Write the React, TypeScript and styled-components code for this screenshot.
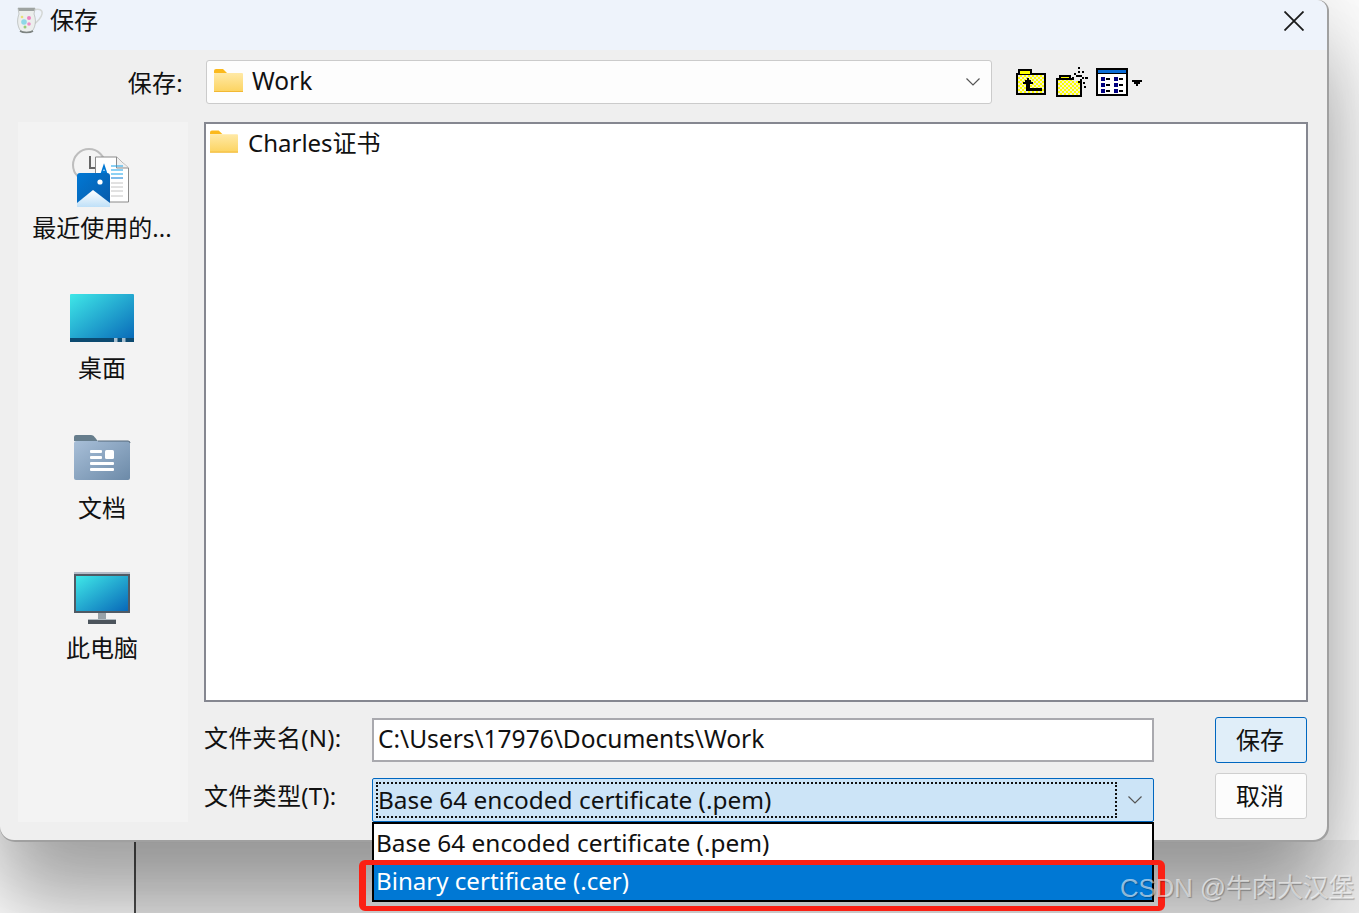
import React from 'react';
import styled, { createGlobalStyle } from 'styled-components';

const GlobalStyle = createGlobalStyle`
  html, body {
    margin: 0;
    padding: 0;
    background: #ffffff;
    overflow: hidden;
  }
  body {
    font-family: 'Noto Sans', 'Noto Sans CJK SC', sans-serif;
    color: #111111;
  }
`;

const Page = styled.div`
  position: relative;
  width: 1359px;
  height: 913px;
  overflow: hidden;
  background: #ffffff;
`;

const Dialog = styled.div`
  position: relative;
  z-index: 1;
  box-sizing: border-box;
  width: 1327px;
  height: 840px;
  background: #efefef;
  border-radius: 0 10px 14px 14px;
  box-shadow: 1px 1px 0 1px #a0a0a0, 0 0 100px rgba(0, 0, 0, 0.18),
    0 70px 80px rgba(0, 0, 0, 0.3);
  display: flex;
  flex-direction: column;
`;

const BehindWindow = styled.div`
  box-sizing: border-box;
  width: 1225px;
  height: 73px;
  margin-left: 134px;
  background: #eeeeee;
  border-left: 2px solid #4d4d4d;
  box-shadow: -4px 0 0 rgba(255, 255, 255, 0.25);
`;

const TitleBar = styled.div`
  height: 50px;
  flex: none;
  display: flex;
  align-items: center;
  padding: 0 23px 10px 16px;
  box-sizing: border-box;
  background: #eef3fb;
  border-radius: 0 10px 0 0;
  font-size: 24px;
  line-height: 34px;
`;

const TitleText = styled.span`
  margin-left: 6px;
  flex: 1;
`;

const CloseSlot = styled.span`
  display: flex;
  margin-top: 2px;
`;

const ToolRow = styled.div`
  display: flex;
  align-items: center;
  height: 44px;
  margin-top: 10px;
`;

const LookInLabel = styled.div`
  width: 183px;
  text-align: right;
  font-size: 24px;
  line-height: 34px;
  padding-top: 2px;
  letter-spacing: 0.3px;
`;

const LookInSelect = styled.div`
  box-sizing: border-box;
  width: 786px;
  height: 44px;
  margin-left: 23px;
  padding: 0 11px 4px 7px;
  display: flex;
  align-items: center;
  gap: 9px;
  background: #fdfdfd;
  border: 1px solid #cbcbcb;
  border-radius: 3px;
  font-size: 24.5px;
`;

const SelectText = styled.span`
  flex: 1;
`;

const SelectArrow = styled.span`
  display: flex;
  margin-top: 4px;
`;

const ToolIcons = styled.div`
  display: flex;
  align-items: center;
  margin-left: 24px;
  gap: 8px;
`;

const MainRow = styled.div`
  display: flex;
  gap: 16px;
  margin-top: 18px;
  padding-left: 18px;
`;

const Sidebar = styled.nav`
  box-sizing: border-box;
  width: 170px;
  height: 700px;
  padding: 22px 2px 0 0;
  background: #f3f3f3;
`;

const PlaceItem = styled.div`
  height: 140px;
  display: flex;
  flex-direction: column;
  align-items: center;
  font-size: 24px;
  line-height: 34px;
  white-space: nowrap;
`;

const PlaceLabel = styled.span`
  margin-top: 3px;
`;

const ContentColumn = styled.div`
  width: 1104px;
`;

const FileList = styled.div`
  box-sizing: border-box;
  height: 580px;
  padding: 4px 4px;
  background: #ffffff;
  border: 2px solid #858790;
`;

const FileRow = styled.div`
  display: flex;
  align-items: center;
  gap: 10px;
  height: 26px;
  font-size: 24px;
`;

const BottomRow = styled.div`
  display: flex;
  justify-content: space-between;
  margin-top: 16px;
`;

const Fields = styled.div`
  display: grid;
  grid-template-columns: 168px 782px;
  grid-auto-rows: 44px;
  row-gap: 16px;
`;

const FieldLabel = styled.label<{ $top: number }>`
  font-size: 24px;
  line-height: 34px;
  padding-top: ${({ $top }) => $top}px;
  letter-spacing: 0.3px;
  white-space: nowrap;
`;

const PathInput = styled.div`
  box-sizing: border-box;
  display: flex;
  align-items: center;
  padding: 0 0 4px 4px;
  background: #ffffff;
  border: 2px solid #a9a9ae;
  font-size: 24.5px;
  white-space: nowrap;
`;

const TypeCombo = styled.div`
  position: relative;
  box-sizing: border-box;
  display: flex;
  align-items: center;
  padding: 3px 11px 3px 3px;
  background: #cce4f7;
  border: 1px solid #0067c0;
  border-radius: 2px;
  font-size: 24.4px;
`;

const FocusBox = styled.div`
  box-sizing: border-box;
  width: 741px;
  height: 36px;
  margin-right: 11px;
  padding-bottom: 2px;
  display: flex;
  align-items: center;
  border: 2px dotted #111111;
  white-space: nowrap;
`;

const TypeList = styled.div`
  position: absolute;
  z-index: 2;
  top: 43px;
  left: -1px;
  right: -1px;
  height: 80px;
  box-sizing: border-box;
  background: #ffffff;
  border: 2px solid #000000;
  font-size: 24.4px;
`;

const TypeOption = styled.div<{ $selected?: boolean }>`
  box-sizing: border-box;
  height: ${({ $selected }) => ($selected ? 36 : 40)}px;
  padding: 0 0 ${({ $selected }) => ($selected ? 3 : 4)}px 2px;
  display: flex;
  align-items: center;
  white-space: nowrap;
  font-size: ${({ $selected }) => ($selected ? 24.1 : 24.4)}px;
  background: ${({ $selected }) => ($selected ? '#0078d4' : '#ffffff')};
  color: ${({ $selected }) => ($selected ? '#ffffff' : '#111111')};
`;

const Buttons = styled.div`
  display: flex;
  flex-direction: column;
  gap: 10px;
  width: 92px;
  margin: -1px 1px 0 0;
`;

const DialogButton = styled.button<{ $primary?: boolean }>`
  height: 46px;
  padding: 0 2px 4px 0;
  font: inherit;
  font-size: 24px;
  color: #111111;
  border-radius: 3px;
  background: ${({ $primary }) => ($primary ? '#e0eef9' : '#fcfcfc')};
  border: 1px solid ${({ $primary }) => ($primary ? '#0067c0' : '#cfcfcf')};
`;

const RedMark = styled.div`
  position: absolute;
  z-index: 3;
  left: 359px;
  top: 860px;
  width: 806px;
  height: 51px;
  box-sizing: border-box;
  border: solid #fb2014;
  border-width: 5px 7px 5px 7px;
  border-radius: 6px;
`;

const Watermark = styled.div`
  position: absolute;
  z-index: 4;
  left: 1120px;
  top: 871px;
  font-family: 'Liberation Sans', 'Noto Sans CJK SC', sans-serif;
  font-size: 25.7px;
  line-height: 34px;
  white-space: nowrap;
  color: rgba(255, 255, 255, 0.58);
  text-shadow: 1px 1px 1px rgba(0, 0, 0, 0.28);
`;

const FolderIcon = ({ width = 29 }: { width?: number }) => (
  <svg width={width} height="23" viewBox="0 0 29 23">
    <defs>
      <linearGradient id="folderBody" x1="0" y1="0" x2="0" y2="1">
        <stop offset="0" stopColor="#ffe9a6" />
        <stop offset="1" stopColor="#fcd35f" />
      </linearGradient>
    </defs>
    <path d="M0 2a2 2 0 0 1 2-2h7l4 4H0z" fill="#fbb91c" />
    <rect x="0" y="4" width="29" height="19" rx="1" fill="url(#folderBody)" />
    <rect x="0" y="22" width="29" height="1" fill="#f2b833" />
  </svg>
);

const JugIcon = () => (
  <svg width="28" height="28" viewBox="0 0 28 28">
    <path d="M18 4c5-2 9 0 8 4-1 5-5 8-9 11" fill="none" stroke="#d4d7d5" strokeWidth="1.4" />
    <path d="M2 2h17l-1 6c2 5 2 11-1 16-2 3-11 3-13 0-3-5-3-11-1-16z" fill="#eceeed" stroke="#b0b4b2" strokeWidth="0.7" />
    <path d="M2 2h17l-1 3H3z" fill="#9ea3a1" />
    <circle cx="8" cy="16" r="2.8" fill="#8ed8e8" />
    <circle cx="13" cy="12" r="2" fill="#ee82c0" />
    <circle cx="13" cy="18" r="1.8" fill="#f08ac6" />
    <circle cx="9" cy="21" r="1.5" fill="#98cc78" />
    <circle cx="6" cy="11" r="1.3" fill="#e8e07a" />
    <path d="M4 25c3 2 10 2 13 0" fill="none" stroke="#7d8381" strokeWidth="1.6" />
  </svg>
);

const CloseIcon = () => (
  <svg width="20" height="20" viewBox="0 0 20 20">
    <path d="M0.5 0.5l19 19M19.5 0.5l-19 19" stroke="#1a1a1a" strokeWidth="1.8" fill="none" />
  </svg>
);

const Chevron = ({ color = '#555555' }: { color?: string }) => (
  <svg width="14" height="8" viewBox="0 0 14 8">
    <path d="M0.5 0.5L7 7l6.5-6.5" fill="none" stroke={color} strokeWidth="1.2" />
  </svg>
);

const DitherDefs = ({ id }: { id: string }) => (
  <defs>
    <pattern id={id} width="4" height="4" patternUnits="userSpaceOnUse">
      <rect width="4" height="4" fill="#ffff00" />
      <rect width="2" height="2" fill="#f0f0d8" />
      <rect x="2" y="2" width="2" height="2" fill="#f0f0d8" />
    </pattern>
  </defs>
);

const UpFolderIcon = () => (
  <svg width="32" height="26" viewBox="0 0 32 26" shapeRendering="crispEdges">
    <DitherDefs id="ditherUp" />
    <path d="M1 5h28v20H1z" fill="url(#ditherUp)" stroke="#000" strokeWidth="2" />
    <path d="M3 5V1h12v4" fill="#ffff00" stroke="#000" strokeWidth="2" />
    <path d="M7 15v-2h2v-2h2V9h2v2h2v2h2v2z" fill="#000" />
    <rect x="10" y="15" width="4" height="7" fill="#000" />
    <rect x="10" y="19" width="16" height="3" fill="#000" />
  </svg>
);

const NewFolderIcon = () => (
  <svg width="32" height="30" viewBox="0 0 32 30" shapeRendering="crispEdges">
    <DitherDefs id="ditherNew" />
    <path d="M1 12h24v17H1z" fill="url(#ditherNew)" stroke="#000" strokeWidth="2" />
    <path d="M4 11V9h10v2" fill="#ffff00" stroke="#000" strokeWidth="2" />
    <rect x="18" y="6" width="8" height="8" fill="#efefef" />
    <g fill="#000">
      <rect x="22" y="0" width="2" height="2" />
      <rect x="22" y="4" width="2" height="2" />
      <rect x="22" y="8" width="2" height="2" />
      <rect x="22" y="14" width="2" height="2" />
      <rect x="16" y="10" width="2" height="2" />
      <rect x="18" y="6" width="2" height="2" />
      <rect x="20" y="8" width="2" height="2" />
      <rect x="26" y="4" width="2" height="2" />
      <rect x="24" y="8" width="2" height="2" />
      <rect x="26" y="10" width="2" height="2" />
      <rect x="29" y="10" width="3" height="2" />
      <rect x="24" y="12" width="2" height="2" />
      <rect x="27" y="15" width="2" height="2" />
      <rect x="28" y="19" width="2" height="2" />
    </g>
  </svg>
);

const ViewMenuIcon = () => (
  <svg width="46" height="28" viewBox="0 0 46 28" shapeRendering="crispEdges">
    <rect x="1" y="1" width="30" height="26" fill="#ffffff" stroke="#000" strokeWidth="2" />
    <rect x="2" y="2" width="28" height="3" fill="#0a6cd6" />
    <rect x="2" y="5" width="28" height="1" fill="#000" />
    <g fill="#000080">
      <rect x="5" y="9" width="4" height="4" />
      <rect x="18" y="9" width="4" height="4" />
      <rect x="5" y="15" width="4" height="4" />
      <rect x="18" y="15" width="4" height="4" />
      <rect x="5" y="21" width="4" height="4" />
      <rect x="18" y="21" width="4" height="4" />
    </g>
    <g fill="#000">
      <rect x="10" y="10" width="4" height="2" />
      <rect x="23" y="10" width="4" height="2" />
      <rect x="10" y="16" width="4" height="2" />
      <rect x="23" y="16" width="4" height="2" />
      <rect x="10" y="22" width="4" height="2" />
      <rect x="23" y="22" width="4" height="2" />
    </g>
    <path d="M36 12h10v2h-2v2h-2v2h-2v-2h-2v-2h-2z" fill="#000" />
  </svg>
);

const RecentIcon = () => (
  <svg width="64" height="64" viewBox="0 0 64 64">
    <defs>
      <linearGradient id="recentPhoto" x1="0" y1="0" x2="1" y2="1">
        <stop offset="0" stopColor="#0078d4" />
        <stop offset="1" stopColor="#0a5aa8" />
      </linearGradient>
      <linearGradient id="recentHill" x1="0" y1="0" x2="0" y2="1">
        <stop offset="0" stopColor="#ffffff" />
        <stop offset="1" stopColor="#bfe0f8" />
      </linearGradient>
    </defs>
    <circle cx="19" cy="21" r="16" fill="#f4f4f4" stroke="#bdbdbd" strokeWidth="2" />
    <path d="M20 12v12h7" fill="none" stroke="#666666" strokeWidth="2" />
    <path d="M25.5 13h21l12 11v34h-33z" fill="#ffffff" stroke="#8b8b8b" strokeWidth="1" />
    <path d="M46.5 13v11h12" fill="#f0f0f0" stroke="#8b8b8b" strokeWidth="1" />
    <path d="M31 31l3-9 3 9M32 28h4" fill="none" stroke="#0078d4" strokeWidth="1.8" />
    <g stroke="#19a3ea" strokeWidth="1">
      <line x1="41" y1="22" x2="53" y2="22" />
      <line x1="41" y1="26" x2="53" y2="26" />
      <line x1="41" y1="30" x2="53" y2="30" />
    </g>
    <line x1="41" y1="34" x2="53" y2="34" stroke="#0078d4" strokeWidth="1" />
    <g stroke="#c4c4c4" strokeWidth="1">
      <line x1="41" y1="39" x2="53" y2="39" />
      <line x1="41" y1="43" x2="53" y2="43" />
      <line x1="41" y1="47" x2="53" y2="47" />
      <line x1="41" y1="52" x2="53" y2="52" />
    </g>
    <path d="M7 32a3 3 0 0 1 3-3h27a3 3 0 0 1 3 3v31H7z" fill="url(#recentPhoto)" />
    <path d="M7 63V59l16-13 17 13v4z" fill="url(#recentHill)" />
    <circle cx="30" cy="38" r="2.6" fill="#ffffff" />
  </svg>
);

const DesktopIcon = () => (
  <svg width="64" height="64" viewBox="0 0 64 64">
    <defs>
      <linearGradient id="deskScreen" x1="0" y1="0" x2="1" y2="1">
        <stop offset="0" stopColor="#3fe8e8" />
        <stop offset="1" stopColor="#0868b8" />
      </linearGradient>
    </defs>
    <path d="M0 11a1 1 0 0 1 1-1h62a1 1 0 0 1 1 1v45H0z" fill="url(#deskScreen)" />
    <rect x="0" y="54" width="64" height="4" fill="#0c4a70" />
    <rect x="44" y="54" width="3.5" height="4" fill="#a8c0d0" />
    <rect x="52" y="54" width="3.5" height="4" fill="#a8c0d0" />
  </svg>
);

const DocumentsIcon = () => (
  <svg width="64" height="64" viewBox="0 0 64 64">
    <defs>
      <linearGradient id="docBody" x1="0" y1="0" x2="1" y2="1">
        <stop offset="0" stopColor="#a8bfd8" />
        <stop offset="1" stopColor="#6c8aa8" />
      </linearGradient>
    </defs>
    <path d="M4 13a2 2 0 0 1 2-2h15c3 0 4 3 7 6H4z" fill="#667d8c" />
    <rect x="4" y="17" width="56" height="39" rx="2" fill="url(#docBody)" />
    <path d="M28 17h30a2 2 0 0 1 2 2" fill="none" stroke="#55697a" strokeWidth="1" />
    <g fill="#ffffff">
      <rect x="20" y="26" width="12" height="3" rx="1" />
      <rect x="20" y="32" width="12" height="3" rx="1" />
      <rect x="35" y="26" width="9" height="9" rx="1.5" />
      <rect x="20" y="38" width="24" height="3" rx="1" />
      <rect x="20" y="44" width="24" height="3" rx="1" />
    </g>
  </svg>
);

const ComputerIcon = () => (
  <svg width="64" height="64" viewBox="0 0 64 64">
    <defs>
      <linearGradient id="pcScreen" x1="0" y1="0" x2="1" y2="1">
        <stop offset="0" stopColor="#3fe8e8" />
        <stop offset="1" stopColor="#0868b8" />
      </linearGradient>
    </defs>
    <rect x="4" y="8" width="56" height="2" fill="#b4bcc8" />
    <rect x="4" y="10" width="56" height="39" fill="#505a64" />
    <rect x="6" y="12" width="52" height="35" fill="url(#pcScreen)" />
    <rect x="28" y="49" width="8" height="6" fill="#98a2a8" />
    <rect x="18" y="55" width="28" height="1.5" fill="#b0bac0" />
    <rect x="18" y="56" width="28" height="4" fill="#4c545c" />
  </svg>
);

const App: React.FC = () => {
  return (
    <Page>
      <GlobalStyle />
      <Dialog>
        <TitleBar>
          <JugIcon />
          <TitleText>保存</TitleText>
          <CloseSlot>
            <CloseIcon />
          </CloseSlot>
        </TitleBar>
        <ToolRow>
          <LookInLabel>保存:</LookInLabel>
          <LookInSelect>
            <FolderIcon />
            <SelectText>Work</SelectText>
            <SelectArrow>
              <Chevron />
            </SelectArrow>
          </LookInSelect>
          <ToolIcons>
            <UpFolderIcon />
            <NewFolderIcon />
            <ViewMenuIcon />
          </ToolIcons>
        </ToolRow>
        <MainRow>
          <Sidebar>
            <PlaceItem>
              <RecentIcon />
              <PlaceLabel>最近使用的...</PlaceLabel>
            </PlaceItem>
            <PlaceItem>
              <DesktopIcon />
              <PlaceLabel>桌面</PlaceLabel>
            </PlaceItem>
            <PlaceItem>
              <DocumentsIcon />
              <PlaceLabel>文档</PlaceLabel>
            </PlaceItem>
            <PlaceItem>
              <ComputerIcon />
              <PlaceLabel>此电脑</PlaceLabel>
            </PlaceItem>
          </Sidebar>
          <ContentColumn>
            <FileList>
              <FileRow>
                <FolderIcon width={28} />
                <span>Charles证书</span>
              </FileRow>
            </FileList>
            <BottomRow>
              <Fields>
                <FieldLabel $top={3}>文件夹名(N):</FieldLabel>
                <PathInput>C:\Users\17976\Documents\Work</PathInput>
                <FieldLabel $top={1}>文件类型(T):</FieldLabel>
                <TypeCombo>
                  <FocusBox>Base 64 encoded certificate (.pem)</FocusBox>
                  <Chevron />
                  <TypeList>
                    <TypeOption>Base 64 encoded certificate (.pem)</TypeOption>
                    <TypeOption $selected>Binary certificate (.cer)</TypeOption>
                  </TypeList>
                </TypeCombo>
              </Fields>
              <Buttons>
                <DialogButton $primary>保存</DialogButton>
                <DialogButton>取消</DialogButton>
              </Buttons>
            </BottomRow>
          </ContentColumn>
        </MainRow>
      </Dialog>
      <BehindWindow />
      <RedMark />
      <Watermark>CSDN @牛肉大汉堡</Watermark>
    </Page>
  );
};

export default App;
